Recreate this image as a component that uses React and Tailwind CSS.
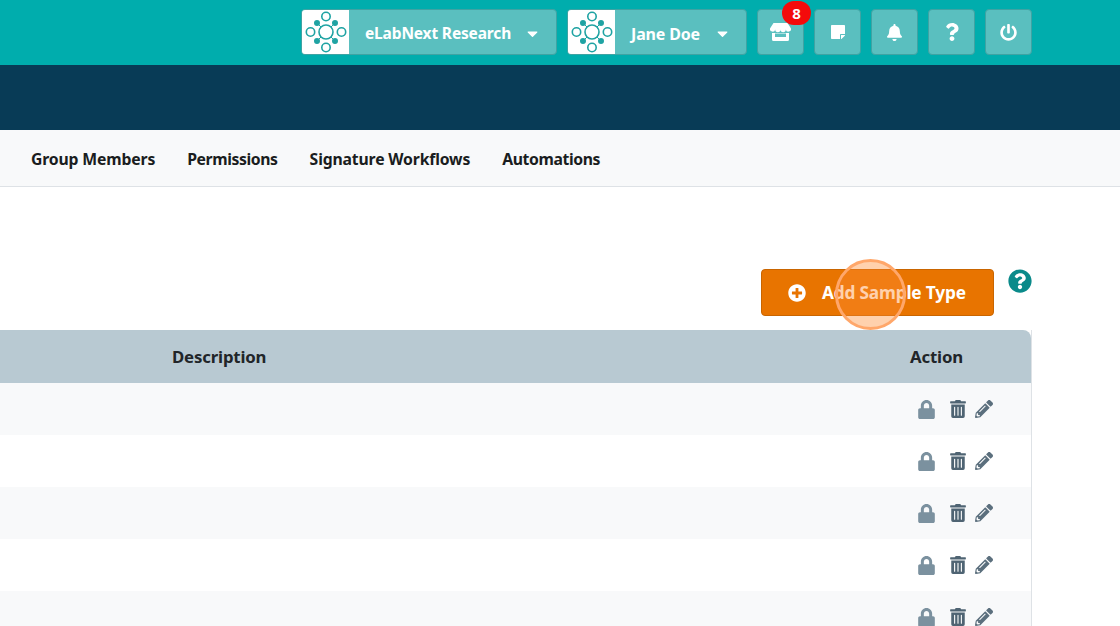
import React from 'react';
import { FaStickyNote, FaBell, FaQuestion, FaPowerOff, FaPlusCircle, FaQuestionCircle, FaLock, FaTrashAlt, FaPencilAlt, FaCaretDown } from 'react-icons/fa';

const Logo = ({ size = 46 }) => (
  <svg width={size} height={size} viewBox="0 0 46 46" fill="none" stroke="#1fa3a3" strokeWidth="1.6">
    <circle cx="23" cy="23" r="7" />
    <circle cx="23" cy="7.5" r="4.2" />
    <circle cx="23" cy="38.5" r="4.2" />
    <circle cx="7.5" cy="23" r="4.2" />
    <circle cx="38.5" cy="23" r="4.2" />
    <circle cx="14" cy="14" r="2.2" fill="#1fa3a3" />
    <circle cx="32" cy="14" r="2.2" fill="#1fa3a3" />
    <circle cx="14" cy="32" r="2.2" fill="#1fa3a3" />
    <circle cx="32" cy="32" r="2.2" fill="#1fa3a3" />
    <path d="M14 14l4 4M32 14l-4 4M14 32l4-4M32 32l-4-4" strokeWidth="1" />
  </svg>
);

// store icon, awning over a box with an open slot
const StoreIcon = () => (
  <svg width="21" height="18" viewBox="0 0 21 18" fill="white">
    <path d="M3.5 0h14L21 5.5a2.6 2.6 0 0 1-5.2 1 2.6 2.6 0 0 1-5.3 0 2.6 2.6 0 0 1-5.3 0A2.6 2.6 0 0 1 0 5.5z" />
    <path fillRule="evenodd" d="M2 10h17v6.5a1.5 1.5 0 0 1-1.5 1.5h-14A1.5 1.5 0 0 1 2 16.5zM5 10.5v3.5h11v-3.5z" />
  </svg>
);

const DropButton = ({ label, width, labelSize }) => (
  <div className={`flex h-[46px] ${width} items-center overflow-hidden rounded border border-[#3fa3a3] bg-[#5abfbf]`}>
    <div className="flex h-full w-[47px] shrink-0 items-center justify-center bg-white">
      <Logo />
    </div>
    <span className={`flex flex-1 items-center justify-between pl-[16px] pr-[15px] pt-[3px] ${labelSize} font-bold tracking-[-0.01em] text-white`}>
      {label}
      <FaCaretDown className="text-[17px]" />
    </span>
  </div>
);

const IconButton = ({ children, badge }) => (
  <div className="relative flex h-[46px] w-[47px] items-center justify-center rounded border border-[#3fa3a3] bg-[#5abfbf] text-white">
    {children}
    {badge && (
      <span className="absolute -top-[9px] left-[24px] flex h-[24px] w-[29px] items-center justify-center rounded-full bg-[#f40b0b] text-[15px] font-bold text-white">
        {badge}
      </span>
    )}
  </div>
);

const rows = [0, 1, 2, 3, 4];

export default function App() {
  return (
    <div className="h-[626px] w-[1120px] overflow-hidden bg-white font-['Noto_Sans',sans-serif] text-[#212529]">
      <header className="flex h-[65px] items-center justify-end gap-[10px] bg-[#00adad] pb-[1px] pr-[88px]">
        <DropButton label="eLabNext Research" width="w-[256px]" labelSize="text-[15.5px]" />
        <DropButton label="Jane Doe" width="w-[180px]" labelSize="text-[16px]" />
        <IconButton badge="8"><StoreIcon /></IconButton>
        <IconButton><FaStickyNote className="text-[16px]" /></IconButton>
        <IconButton><FaBell className="text-[17px]" /></IconButton>
        <IconButton><FaQuestion className="text-[18px]" /></IconButton>
        <IconButton><FaPowerOff className="text-[17px]" /></IconButton>
      </header>

      <div className="h-[65px] bg-[#083b56]" />

      <nav className="flex h-[57px] items-center gap-[32px] border-b border-[#dee2e6] bg-[#f8f9fa] pl-[31px] pt-[4px] text-[15.75px] font-bold tracking-[-0.01em] text-[#1a1d20]">
        <span>Group Members</span>
        <span className="tracking-[-0.025em]">Permissions</span>
        <span>Signature Workflows</span>
        <span className="tracking-[-0.025em]">Automations</span>
      </nav>

      <div className="flex h-[143px] items-start justify-end pr-[88px] pt-[82px]">
        <div className="relative mr-[14px] flex h-[47px] w-[233px] items-center rounded border border-[#c96500] bg-[#e87400] pl-[26px] text-[17.25px] font-bold tracking-[-0.01em] text-white">
          <FaPlusCircle className="mr-[16px] text-[18px]" />
          <span>Add Sample Type</span>
          <div className="absolute left-[73px] top-[-11px] h-[71px] w-[71px] rounded-full border-[3px] border-[#ffa76a] bg-[#ff8c33]/40" />
        </div>
        <FaQuestionCircle className="text-[24px] text-[#0a8a8a]" />
      </div>

      <div className="mr-[88px] border-r border-[#dee2e6]">
        <div className="flex h-[53px] items-center rounded-tr-lg bg-[#b8c9d2] text-[16.8px] font-bold tracking-[-0.01em]">
          <span className="ml-[172px]">Description</span>
          <span className="ml-auto mr-[68px]">Action</span>
        </div>
        {rows.map((i) => (
          <div key={i} className={`flex h-[52px] items-center justify-end pr-[38px] ${i % 2 === 0 ? 'bg-[#f8f9fa]' : 'bg-white'}`}>
            <FaLock className="mr-[13px] text-[19px] text-[#7b919f]" />
            <FaTrashAlt className="mr-[8px] text-[18px] text-[#4f6473]" />
            <FaPencilAlt className="text-[18px] text-[#5b6f7d]" />
          </div>
        ))}
      </div>
    </div>
  );
}
